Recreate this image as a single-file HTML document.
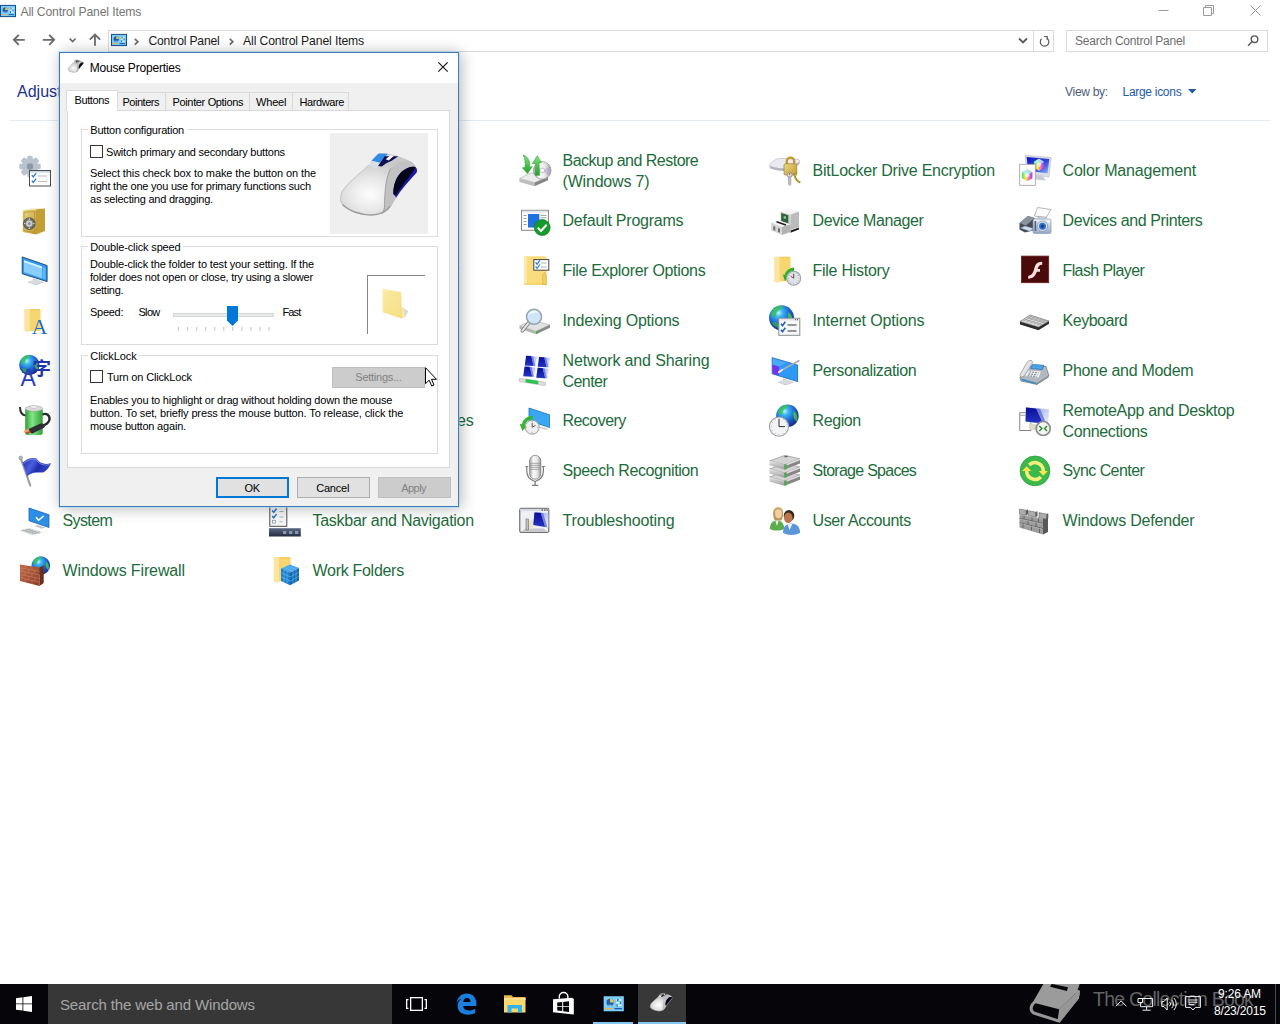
<!DOCTYPE html>
<html><head><meta charset="utf-8"><title>All Control Panel Items</title>
<style>
html,body{margin:0;padding:0;}
body{width:1280px;height:1024px;overflow:hidden;background:#fff;position:relative;font-family:"Liberation Sans",sans-serif;}
.a{position:absolute;white-space:nowrap;}
svg{position:absolute;overflow:visible;}
.bx{position:absolute;box-sizing:border-box;}
</style></head><body>
<svg width="0" height="0" style="left:0;top:0"><defs>
<radialGradient id="gGlobe" cx=".38" cy=".3" r=".75"><stop offset="0" stop-color="#b9f3ff"/><stop offset=".22" stop-color="#39b6f0"/><stop offset=".6" stop-color="#1f5fd0"/><stop offset="1" stop-color="#18247e"/></radialGradient>
<linearGradient id="gFolder" x1="0" y1="0" x2="0" y2="1"><stop offset="0" stop-color="#fbe08a"/><stop offset="1" stop-color="#f4cd5e"/></linearGradient>
<linearGradient id="gSilverH" x1="0" y1="0" x2="1" y2="0"><stop offset="0" stop-color="#a9a9a9"/><stop offset=".35" stop-color="#fbfbfb"/><stop offset=".7" stop-color="#e3e3e6"/><stop offset="1" stop-color="#9a9a9a"/></linearGradient>
<linearGradient id="gSilverV" x1="0" y1="0" x2="0" y2="1"><stop offset="0" stop-color="#f6f6f6"/><stop offset="1" stop-color="#b4b4b4"/></linearGradient>
<linearGradient id="gSilverV2" x1="0" y1="0" x2="0" y2="1"><stop offset="0" stop-color="#e9e9e9"/><stop offset="1" stop-color="#9a9a9a"/></linearGradient>
<linearGradient id="gScreen" x1="0" y1="0" x2="1" y2=".9"><stop offset="0" stop-color="#0c14a0"/><stop offset=".4" stop-color="#2436c8"/><stop offset=".62" stop-color="#8fa4ee"/><stop offset="1" stop-color="#f2f5ff"/></linearGradient>
<linearGradient id="gScrBg" x1="0" y1="0" x2="1" y2="1"><stop offset="0" stop-color="#6f82e6"/><stop offset=".55" stop-color="#c3cdf7"/><stop offset="1" stop-color="#f1f4ff"/></linearGradient>
<linearGradient id="gNavy" x1="0" y1="0" x2="0" y2="1"><stop offset="0" stop-color="#0a0f96"/><stop offset="1" stop-color="#2434c4"/></linearGradient>
<linearGradient id="gCMScr" x1="0" y1="0" x2="1" y2="1"><stop offset="0" stop-color="#1018b8"/><stop offset=".55" stop-color="#2a44dc"/><stop offset="1" stop-color="#8fb4f6"/></linearGradient>
<linearGradient id="gGreenH" x1="0" y1="0" x2="1" y2="0"><stop offset="0" stop-color="#2e9e36"/><stop offset=".4" stop-color="#86e486"/><stop offset="1" stop-color="#2f9f38"/></linearGradient>
<linearGradient id="gGreenV" x1="0" y1="0" x2="0" y2="1"><stop offset="0" stop-color="#7fe57a"/><stop offset="1" stop-color="#22a02c"/></linearGradient>
<linearGradient id="gFlag" x1="0" y1="0" x2="1" y2=".4"><stop offset="0" stop-color="#1c2aa0"/><stop offset=".4" stop-color="#4a5fe0"/><stop offset=".65" stop-color="#1f2ea8"/><stop offset="1" stop-color="#3448c8"/></linearGradient>
<linearGradient id="gRainbow" x1="0" y1="0" x2="1" y2="0"><stop offset="0" stop-color="#3fe27a"/><stop offset=".35" stop-color="#f3f03a"/><stop offset=".7" stop-color="#ff5fd0"/><stop offset="1" stop-color="#7a4cf0"/></linearGradient>
<linearGradient id="gBar" x1="0" y1="0" x2="0" y2="1"><stop offset="0" stop-color="#5c6986"/><stop offset="1" stop-color="#232b40"/></linearGradient>
<linearGradient id="gBrick" x1="0" y1="0" x2="1" y2="1"><stop offset="0" stop-color="#c26a4a"/><stop offset="1" stop-color="#8e3f28"/></linearGradient>
<linearGradient id="gGold" x1="0" y1="0" x2="1" y2="1"><stop offset="0" stop-color="#ead98a"/><stop offset="1" stop-color="#c39a2c"/></linearGradient>
<linearGradient id="gCam" x1="0" y1="0" x2="0" y2="1"><stop offset="0" stop-color="#eef3f9"/><stop offset="1" stop-color="#93a9c8"/></linearGradient>
</defs></svg>
<!-- window chrome -->
<svg style="left:0px;top:3px" width="16" height="16" viewBox="0 0 32 32"><rect x="1" y="4.800" width="30" height="22.400" fill="#7ccdfb" stroke="#0f4f8a" stroke-width="2"/><circle cx="10.500" cy="14" r="5.300" fill="#1c5fae"/><path d="M10.500 14V8.700A5.300 5.300 0 0 1 15.800 14z" fill="#f6c23a"/><path d="M7 17.500a5.300 5.300 0 0 0 7 0z" fill="#e8f6ff" opacity=".7"/><path d="M19.500 10.500h8M19.500 14.500h8M19.500 18.500h8" stroke="#e8f6ff" stroke-width="2"/><path d="M22 9v3M26 13v3M21 17v3" stroke="#1c5fae" stroke-width="2"/><path d="M3.500 23.300h11" stroke="#e9b44a" stroke-width="2"/><path d="M17 23.300h11.500" stroke="#1c5fae" stroke-width="2"/></svg>
<div class="a " style="left:20.4px;top:3.5px;font-size:12.2px;line-height:16px;color:#757575;letter-spacing:-0.132px;">All Control Panel Items</div>
<svg style="left:1150px;top:0" width="130" height="24" viewBox="0 0 130 24"><g stroke="#9a9a9a" stroke-width="1" fill="none"><path d="M8.5 10.5h10"/><path d="M53.5 7.5h8v8h-8z M55.5 7.5v-2h8v8h-2"/><path d="M100.5 5.5l10 10M110.500 5.5l-10 10"/></g></svg>
<svg style="left:0;top:30px" width="108" height="22" viewBox="0 0 108 22"><g stroke="#6b6b6b" stroke-width="1.900" fill="none"><path d="M13.900 9.850H24.800M18.800 4.900L13.900 9.850L18.800 14.800"/><path d="M42.900 9.850H54.100M49.200 4.900L54.100 9.850L49.200 14.800"/><path d="M69.600 8.500L72.600 11.600L75.600 8.500" stroke-width="1.600"/><path d="M95 15.700V4.800M89.800 9.700L95 4.500L100.200 9.700" stroke-width="1.800"/></g></svg>
<div class="bx" style="left:108px;top:30px;width:946px;height:22px;border:1px solid #d9d9d9"></div>
<div class="bx" style="left:1033px;top:30px;width:1px;height:22px;background:#d9d9d9"></div>
<svg style="left:111px;top:32px" width="16" height="16" viewBox="0 0 32 32"><rect x="1" y="4.800" width="30" height="22.400" fill="#7ccdfb" stroke="#0f4f8a" stroke-width="2"/><circle cx="10.500" cy="14" r="5.300" fill="#1c5fae"/><path d="M10.500 14V8.700A5.300 5.300 0 0 1 15.800 14z" fill="#f6c23a"/><path d="M7 17.500a5.300 5.300 0 0 0 7 0z" fill="#e8f6ff" opacity=".7"/><path d="M19.500 10.500h8M19.500 14.500h8M19.500 18.500h8" stroke="#e8f6ff" stroke-width="2"/><path d="M22 9v3M26 13v3M21 17v3" stroke="#1c5fae" stroke-width="2"/><path d="M3.500 23.300h11" stroke="#e9b44a" stroke-width="2"/><path d="M17 23.300h11.500" stroke="#1c5fae" stroke-width="2"/></svg>
<svg style="left:130px;top:36px" width="110" height="10" viewBox="0 0 110 10"><g stroke="#6b6b6b" stroke-width="1.600" fill="none"><path d="M4.800 2.800l3.100 2.900-3.100 2.900"/><path d="M99.800 2.800l3.100 2.900-3.100 2.900"/></g></svg>
<div class="a " style="left:148.4px;top:32.8px;font-size:12.2px;line-height:16px;color:#1b1b1b;letter-spacing:-0.205px;">Control Panel</div>
<div class="a " style="left:243.1px;top:32.8px;font-size:12.2px;line-height:16px;color:#1b1b1b;letter-spacing:-0.132px;">All Control Panel Items</div>
<svg style="left:1015px;top:34px" width="40" height="14" viewBox="0 0 40 14"><g stroke="#5a5a5a" stroke-width="1.800" fill="none"><path d="M4 4.500l4 4 4-4"/><path d="M31.800 4.200a4.300 4.300 0 1 1 -5.200 .6" stroke-width="1.200"/><path d="M29 2.500h3.200v3.200" stroke-width="1.200"/></g></svg>
<div class="bx" style="left:1066px;top:30px;width:202px;height:22px;border:1px solid #d9d9d9"></div>
<div class="a " style="left:1075px;top:33px;font-size:12px;line-height:16px;color:#6d6d6d;letter-spacing:-0.209px;">Search Control Panel</div>
<svg style="left:1246px;top:34px" width="14" height="14" viewBox="0 0 14 14"><g stroke="#555" stroke-width="1.400" fill="none"><circle cx="8.500" cy="5.200" r="3.300"/><path d="M6 7.800l-4 4"/></g></svg>
<div class="a " style="left:17px;top:81px;font-size:16px;line-height:22px;color:#1e3287;">Adjust your computer's settings</div>
<div class="a " style="left:1065px;top:83.5px;font-size:12px;line-height:16px;color:#4c607a;letter-spacing:-0.285px;">View by:</div>
<div class="a " style="left:1122.5px;top:83.5px;font-size:12px;line-height:16px;color:#1e5aa8;letter-spacing:-0.290px;">Large icons</div>
<svg style="left:1188px;top:89px" width="9" height="5" viewBox="0 0 9 5"><path d="M0 0h8.500l-4.250 4.500z" fill="#1e5aa8"/></svg>
<div class="bx" style="left:10px;top:120px;width:1260px;height:1px;background:#e2eaf3"></div>
<!-- control panel items -->
<svg style="left:19px;top:154px" width="32" height="32" viewBox="0 0 32 32"><g fill="#bac2ce"><rect x="8.300" y="1.800" width="5.400" height="6" rx="1.200" transform="rotate(0 11 12.500)"/><rect x="8.300" y="1.800" width="5.400" height="6" rx="1.200" transform="rotate(45 11 12.500)"/><rect x="8.300" y="1.800" width="5.400" height="6" rx="1.200" transform="rotate(90 11 12.500)"/><rect x="8.300" y="1.800" width="5.400" height="6" rx="1.200" transform="rotate(135 11 12.500)"/><rect x="8.300" y="1.800" width="5.400" height="6" rx="1.200" transform="rotate(180 11 12.500)"/><rect x="8.300" y="1.800" width="5.400" height="6" rx="1.200" transform="rotate(225 11 12.500)"/><rect x="8.300" y="1.800" width="5.400" height="6" rx="1.200" transform="rotate(270 11 12.500)"/><rect x="8.300" y="1.800" width="5.400" height="6" rx="1.200" transform="rotate(315 11 12.500)"/><circle cx="11" cy="12.500" r="8.300"/></g><circle cx="11" cy="12.500" r="3.200" fill="#8b96a6"/><rect x="10.500" y="16.500" width="21" height="15.500" fill="#fdfdfd" stroke="#4c4c4c" stroke-width="1"/><rect x="11" y="17" width="20" height="1.600" fill="#c9d6e8"/><path d="M12.8 21.1l1.500 1.800 2.800-3.800" fill="none" stroke="#2a7fd4" stroke-width="1.3"/><path d="M12.8 26.6l1.500 1.800 2.800-3.800" fill="none" stroke="#2a7fd4" stroke-width="1.3"/><path d="M19 22h9M19 27.500h9" stroke="#b9bec6" stroke-width="1"/></svg>
<div class="a " style="left:62.5px;top:160.2px;font-size:16px;line-height:21px;color:#1d6b3b;">Administrative Tools</div>
<svg style="left:269px;top:154px" width="32" height="32" viewBox="0 0 32 32"><circle cx="15" cy="15" r="13" fill="url(#gSilverH)" stroke="#8b8b8b" stroke-width=".7"/><circle cx="15" cy="15" r="3" fill="#fff" stroke="#9a9a9a" stroke-width=".6"/><circle cx="23" cy="23" r="8" fill="#179a2c"/><path d="M20.500 18.500l7 4.500-7 4.500z" fill="#fff"/></svg>
<div class="a " style="left:312.5px;top:160.2px;font-size:16px;line-height:21px;color:#1d6b3b;">AutoPlay</div>
<svg style="left:519px;top:154px" width="32" height="32" viewBox="0 0 32 32"><path d="M.5 24.500L12 18.800 29 23 15.500 28.700z" fill="#ececec" stroke="#9a9a9a" stroke-width=".5"/><path d="M.5 24.500L15.500 28.700V32.300L.5 28z" fill="#bdbdbd"/><path d="M15.500 28.700L29 23V26.300L15.500 32.300z" fill="#858585"/><circle cx="23.200" cy="16.400" r="8.800" fill="url(#gSilverH)" stroke="#8b8b8b" stroke-width=".7"/><path d="M23.200 16.400L31 12.500A8.800 8.800 0 0 1 30 22z" fill="#b9a0c8" opacity=".55"/><circle cx="23.200" cy="16.400" r="2.300" fill="#fff" stroke="#9a9a9a" stroke-width=".6"/><path d="M4 1C9 2 11.300 8 10.800 13.200L13.300 12.600 8.600 19.600 3.300 13.800 6 13.600C6.600 9 6 4 4 1z" fill="url(#gGreenV)" stroke="#1f8f27" stroke-width=".5"/><path d="M16.300 21.300L16.800 9.300 13.300 9.800 18.200 1.800 22.300 8.600 20 8.700 20.600 21.300z" fill="url(#gGreenV)" stroke="#1f8f27" stroke-width=".5"/></svg>
<div class="a " style="left:562.5px;top:149.7px;font-size:16px;line-height:21px;color:#1d6b3b;letter-spacing:-0.513px;">Backup and Restore</div>
<div class="a " style="left:562.5px;top:170.7px;font-size:16px;line-height:21px;color:#1d6b3b;letter-spacing:-0.182px;">(Windows 7)</div>
<svg style="left:769px;top:154px" width="32" height="32" viewBox="0 0 32 32"><path d="M.6 11.500C.6 9.500 5 5.500 10.500 4.300L29 5.300C31 5.800 31 9 29.500 10.500L21.500 16.500C14 17 5 15.500 1.500 14z" fill="#eaeaf0" stroke="#a5a5b0" stroke-width=".5"/><path d="M.6 11.500C4 13.500 14 15 21.500 14.200L30.300 7.500C30.700 8.800 30.300 9.800 29.500 10.500L21.500 17C14 17.600 5 16 1.300 14.300z" fill="#b5b5c0"/><path d="M17.800 10.500V7.300a3.700 3.700 0 0 1 7.400 0V10.500" fill="none" stroke="#c59a2c" stroke-width="2.300"/><rect x="15" y="9.800" width="12.800" height="11.300" rx="1.500" fill="url(#gGold)" stroke="#8f6b14" stroke-width=".6"/><circle cx="20.600" cy="20.800" r="2.500" fill="#d8d8d8" stroke="#808080" stroke-width=".7"/><circle cx="20.600" cy="20" r=".8" fill="#c03020"/><path d="M19.600 23h2.200v7.500l-1.100 1-1.100-1z" fill="#c2c2c2" stroke="#808080" stroke-width=".5"/><path d="M25.300 19C25.800 24 27 27 31.300 28.600" fill="none" stroke="#b8901e" stroke-width="2"/></svg>
<div class="a " style="left:812.5px;top:160.2px;font-size:16px;line-height:21px;color:#1d6b3b;letter-spacing:-0.236px;">BitLocker Drive Encryption</div>
<svg style="left:1019px;top:154px" width="32" height="32" viewBox="0 0 32 32"><path d="M6.200 1.300L32 3.500 30 23 8 20z" fill="#d9dde6" stroke="#aab0bd" stroke-width=".5"/><path d="M14 20.800l10 1.300 2.500 4.500-11-1z" fill="#c8ccd4"/><path d="M7.600 2.900L30.300 4.900 28.500 19.300 9.200 17z" fill="url(#gCMScr)"/><path d="M20 4.800000000000001L25.2 7.8V13.8L20 16.8L14.8 13.8V7.8z" fill="url(#gRainbow)"/><path d="M20 4.800000000000001L25.2 7.8L20 10.8L14.8 7.8z" fill="#9ff2ff" opacity=".8"/><circle cx="20" cy="10.8" r="2.1" fill="#fff" opacity=".7"/><rect x=".7" y="10.300" width="15.600" height="21" fill="#fff" stroke="#a79aa8" stroke-width=".8"/><path d="M8.2 15.3L13.4 18.3V24.3L8.2 27.3L3.0 24.3V18.3z" fill="url(#gRainbow)"/><path d="M8.2 15.3L13.4 18.3L8.2 21.3L3.0 18.3z" fill="#9ff2ff" opacity=".8"/><circle cx="8.2" cy="21.3" r="2.1" fill="#fff" opacity=".7"/></svg>
<div class="a " style="left:1062.5px;top:160.2px;font-size:16px;line-height:21px;color:#1d6b3b;letter-spacing:-0.166px;">Color Management</div>
<svg style="left:19px;top:204px" width="32" height="32" viewBox="0 0 32 32"><path d="M17 5.300L26 4.600V27L17 30.600z" fill="#c29f36"/><path d="M3.700 6.200L17 5.300V30.600L3.700 28z" fill="url(#gGold)"/><path d="M3.700 6.200L12 4.500L26 4.600L17 5.300z" fill="#f0e2a0"/><path d="M5 8.300L15.600 7.500V28.500L5 26.600z" fill="none" stroke="#b18e2c" stroke-width=".7"/><circle cx="10.300" cy="19.600" r="5.800" fill="#6e6e6e" stroke="#3e3e3e" stroke-width=".7"/><circle cx="10.300" cy="19.600" r="3.300" fill="#c9c9c9"/><circle cx="10.300" cy="19.600" r="1.300" fill="#8d8d8d"/><g fill="#f2f2f2"><circle cx="10.300" cy="15" r=".7"/><circle cx="10.300" cy="24.200" r=".7"/><circle cx="5.700" cy="19.600" r=".7"/><circle cx="14.900" cy="19.600" r=".7"/></g></svg>
<div class="a " style="left:62.5px;top:210.2px;font-size:16px;line-height:21px;color:#1d6b3b;">Credential Manager</div>
<svg style="left:269px;top:204px" width="32" height="32" viewBox="0 0 32 32"><circle cx="12" cy="13" r="11" fill="#f3f4f5" stroke="#9aa2a8" stroke-width="1.100"/><circle cx="21.30" cy="13.00" r=".45" fill="#8a8a8a"/><circle cx="20.05" cy="17.65" r=".45" fill="#8a8a8a"/><circle cx="16.65" cy="21.05" r=".45" fill="#8a8a8a"/><circle cx="12.00" cy="22.30" r=".45" fill="#8a8a8a"/><circle cx="7.35" cy="21.05" r=".45" fill="#8a8a8a"/><circle cx="3.95" cy="17.65" r=".45" fill="#8a8a8a"/><circle cx="2.70" cy="13.00" r=".45" fill="#8a8a8a"/><circle cx="3.95" cy="8.35" r=".45" fill="#8a8a8a"/><circle cx="7.35" cy="4.95" r=".45" fill="#8a8a8a"/><circle cx="12.00" cy="3.70" r=".45" fill="#8a8a8a"/><circle cx="16.65" cy="4.95" r=".45" fill="#8a8a8a"/><circle cx="20.05" cy="8.35" r=".45" fill="#8a8a8a"/><path d="M12 13V5.500M12 13h6" stroke="#333" stroke-width="1" fill="none"/><rect x="16" y="17" width="15" height="14" fill="#fff" stroke="#7a7a7a" stroke-width=".8"/><rect x="16" y="17" width="15" height="3.500" fill="#2b8fe6"/><path d="M18.500 23.500h10M18.500 26h10M18.500 28.500h10" stroke="#9aa0a8" stroke-width=".9"/></svg>
<div class="a " style="left:312.5px;top:210.2px;font-size:16px;line-height:21px;color:#1d6b3b;">Date and Time</div>
<svg style="left:519px;top:204px" width="32" height="32" viewBox="0 0 32 32"><rect x="2.500" y="6.300" width="27" height="20" fill="#fbfbfb" stroke="#8a8a8a" stroke-width="1"/><rect x="3" y="6.800" width="26" height="1.800" fill="#dfe5ee"/><path d="M4.500 11.500h3M4.500 14.500h3M4.500 17.500h3M4.500 20.500h3" stroke="#9aa0a8" stroke-width="1.100"/><rect x="9" y="10" width="11.300" height="13.500" fill="#1f72e0"/><path d="M21.500 11.500h6M21.500 13.800h6M21.500 16h4" stroke="#9aa0a8" stroke-width=".9"/><circle cx="23.200" cy="23.600" r="8" fill="#179a2c" stroke="#0e7d20" stroke-width=".6"/><path d="M18.800 23.700l3.200 3.300 5.700-6.200" fill="none" stroke="#fff" stroke-width="2"/></svg>
<div class="a " style="left:562.5px;top:210.2px;font-size:16px;line-height:21px;color:#1d6b3b;letter-spacing:-0.226px;">Default Programs</div>
<svg style="left:769px;top:204px" width="32" height="32" viewBox="0 0 32 32"><path d="M21.500 26.500l8.500-3v2l-8.500 3.200z" fill="#1e1e1e"/><path d="M11.500 7.500L21.500 10.500V26L11.500 21z" fill="#cfcfcf"/><path d="M11.500 7.500L20 4.500 30 7.500 21.500 10.500z" fill="#f3f3f3"/><path d="M21.500 10.500L30 7.500V23L21.500 26z" fill="#bcbcbc"/><path d="M12.200 9L19.300 11.300V19.500L12.200 17z" fill="#2f5f3e"/><rect x="14.600" y="12.300" width="2.400" height="2.400" fill="#8fd08f"/><path d="M2.200 18.500L10 16.500 21.500 20.500 13 23z" fill="#f3f3f3"/><path d="M7.500 17.800l9.500 3.100" stroke="#1e1e1e" stroke-width="1.600"/><path d="M2.200 18.500L13 23V31L2.200 26.500z" fill="#d6d6d6"/><path d="M13 23L21.500 20.500V28L13 31z" fill="#b2b2b2"/><path d="M4.300 22l2 .8v4l-2-.8zM9 24l2 .8v4l-2-.8z" fill="#6f6f6f"/></svg>
<div class="a " style="left:812.5px;top:210.2px;font-size:16px;line-height:21px;color:#1d6b3b;letter-spacing:-0.407px;">Device Manager</div>
<svg style="left:1019px;top:204px" width="32" height="32" viewBox="0 0 32 32"><path d="M.5 19L9 12 15.500 14V26L6 28.500.5 25.500z" fill="#454c55"/><path d="M.5 19L9 12 15.500 14 7 21.500z" fill="#8a929c"/><path d="M1.500 24L11 27.300 14.500 24.500 6 22z" fill="#cfe0f2" stroke="#7888a0" stroke-width=".5"/><path d="M18.500 3.500L32 5.500 27 13.700 15.400 12z" fill="#fbfbfb" stroke="#9a9a9a" stroke-width=".7"/><path d="M19 13h8v2.500h-8z" fill="#dbe3ee" stroke="#7a8aa0" stroke-width=".5"/><rect x="14" y="15" width="18" height="14.400" rx="1.500" fill="url(#gCam)" stroke="#7a8aa0" stroke-width=".6"/><rect x="15.500" y="17" width="1.700" height="10" fill="#56627a"/><circle cx="23.500" cy="22.200" r="5.200" fill="#dbe2ec" stroke="#7a8aa0" stroke-width=".7"/><circle cx="23.500" cy="22.200" r="3.500" fill="#2a6fd0"/><circle cx="23.500" cy="22.200" r="1.500" fill="#123a7a"/><circle cx="29.500" cy="17.500" r=".9" fill="#fff"/></svg>
<div class="a " style="left:1062.5px;top:210.2px;font-size:16px;line-height:21px;color:#1d6b3b;letter-spacing:-0.391px;">Devices and Printers</div>
<svg style="left:19px;top:254px" width="32" height="32" viewBox="0 0 32 32"><path d="M14 24.500l4 1.300v2.200l-4-1.200z" fill="#c3c7cc"/><path d="M9 27.500l8-2.300 7.500 2.600-8 2.700z" fill="#d9dcdf"/><path d="M9 27.500l7.500 3 8-2.700v.8l-8 2.700-7.500-3z" fill="#b9bdc2"/><path d="M3.2 2.9L28.1 11.5L28.1 27.6L3.2 19.8z" fill="#2b9af3" stroke="#17314f" stroke-width=".8" stroke-linejoin="round"/><path d="M5 6.300L23 12.500V24.200L5 18.300z" fill="#9ad7ff" opacity=".85"/><path d="M5 6.300L23 12.500V14.500L5 8.300z" fill="#d6efff"/><path d="M23.600 12.700L26.600 13.700V25.400L23.600 24.400z" fill="#5cb9f8"/></svg>
<div class="a " style="left:62.5px;top:260.2px;font-size:16px;line-height:21px;color:#1d6b3b;">Display</div>
<svg style="left:269px;top:254px" width="32" height="32" viewBox="0 0 32 32"><circle cx="16" cy="16" r="14.500" fill="#2b8fe6" stroke="#1a63b4" stroke-width=".8"/><path d="M16 4.500v23M4.500 16h23" stroke="#fff" stroke-width="2.200"/><path d="M16 2.500l3 4h-6zM16 29.500l3-4h-6zM2.500 16l4-3v6zM29.500 16l-4-3v6z" fill="#fff"/></svg>
<div class="a " style="left:312.5px;top:260.2px;font-size:16px;line-height:21px;color:#1d6b3b;letter-spacing:-0.749px;">Ease of Access Center</div>
<svg style="left:519px;top:254px" width="32" height="32" viewBox="0 0 32 32"><path d="M5.200 2.200H26L27.600 3.500V30.600H5.200z" fill="#fbdc7c"/><path d="M5.200 2.200h2.600v28.400H5.200z" fill="#fdeab0"/><path d="M5.200 29.600h22.400v1H5.200z" fill="#f0c550"/><rect x="14.800" y="5.600" width="15" height="10.600" fill="#fdfdfd" stroke="#454545" stroke-width="1"/><path d="M16.6 8.4l1.500 1.800 2.800-3.800" fill="none" stroke="#2a7fd4" stroke-width="1.2"/><path d="M16.6 12.5l1.500 1.800 2.800-3.800" fill="none" stroke="#2a7fd4" stroke-width="1.2"/><path d="M22 9h5.500M22 13h5.500" stroke="#9aa4b0" stroke-width=".8"/><path d="M23.700 30.500V21.200l1.800-3.200 1.800 3.200V30.500z" fill="#f6cf5f" stroke="#dba93a" stroke-width=".6"/></svg>
<div class="a " style="left:562.5px;top:260.2px;font-size:16px;line-height:21px;color:#1d6b3b;letter-spacing:-0.312px;">File Explorer Options</div>
<svg style="left:769px;top:254px" width="32" height="32" viewBox="0 0 32 32"><path d="M10.0 2.7h11.3v24.6h-11.3z" fill="#f3cb58"/><path d="M5.2 2.7h5.2l0.5 1.3v23.3l-2.1 1.9l-3.5-1.6z" fill="#fbe5a0"/><path d="M10.8 4.0h10.5v22.8h-10.5z" fill="#f7d56f"/><path d="M25 15.200A9.300 9.300 0 0 0 17 21.500" fill="none" stroke="#2db02d" stroke-width="3.200"/><path d="M13.800 20.500l7 1.800-5 4.800z" fill="#2db02d"/><circle cx="24.7" cy="24.2" r="7" fill="#dfe3e6" stroke="#9aa2a8" stroke-width="1.100"/><circle cx="30.00" cy="24.20" r=".45" fill="#8a8a8a"/><circle cx="29.29" cy="26.85" r=".45" fill="#8a8a8a"/><circle cx="27.35" cy="28.79" r=".45" fill="#8a8a8a"/><circle cx="24.70" cy="29.50" r=".45" fill="#8a8a8a"/><circle cx="22.05" cy="28.79" r=".45" fill="#8a8a8a"/><circle cx="20.11" cy="26.85" r=".45" fill="#8a8a8a"/><circle cx="19.40" cy="24.20" r=".45" fill="#8a8a8a"/><circle cx="20.11" cy="21.55" r=".45" fill="#8a8a8a"/><circle cx="22.05" cy="19.61" r=".45" fill="#8a8a8a"/><circle cx="24.70" cy="18.90" r=".45" fill="#8a8a8a"/><circle cx="27.35" cy="19.61" r=".45" fill="#8a8a8a"/><circle cx="29.29" cy="21.55" r=".45" fill="#8a8a8a"/><path d="M24.700 24.200V19.800" stroke="#444" stroke-width=".9"/><path d="M24.700 24.200l-3-2" stroke="#c03030" stroke-width="1"/></svg>
<div class="a " style="left:812.5px;top:260.2px;font-size:16px;line-height:21px;color:#1d6b3b;letter-spacing:-0.262px;">File History</div>
<svg style="left:1019px;top:254px" width="32" height="32" viewBox="0 0 32 32"><rect x="2.500" y="2.100" width="27.200" height="26.600" fill="#4a0a0a" stroke="#6e1a1a" stroke-width=".8"/><path d="M23.200 7.800C17.500 7.800 16.300 11 15.300 14.500C14.200 18.500 13.200 21 9.200 22V24.800C14.500 24.500 16.600 21.500 17.800 17.800H21V15H18.600C19.300 12.500 20.200 10.800 23.200 10.800z" fill="#f8dede"/></svg>
<div class="a " style="left:1062.5px;top:260.2px;font-size:16px;line-height:21px;color:#1d6b3b;letter-spacing:-0.602px;">Flash Player</div>
<svg style="left:19px;top:304px" width="32" height="32" viewBox="0 0 32 32"><path d="M10.0 5h11.3v21.9h-11.3z" fill="#f3cb58"/><path d="M5.2 5h5.2l0.5 1.2v20.7l-2.1 1.6l-3.5-1.4z" fill="#fbe5a0"/><path d="M10.8 6.2h10.5v20.2h-10.5z" fill="#f7d56f"/><text x="12.800" y="30.300" font-family="Liberation Serif,serif" font-size="21.500" fill="#1b6fc6">A</text></svg>
<div class="a " style="left:62.5px;top:310.2px;font-size:16px;line-height:21px;color:#1d6b3b;">Fonts</div>
<svg style="left:269px;top:304px" width="32" height="32" viewBox="0 0 32 32"><circle cx="10" cy="20" r="8.500" fill="#3fb54a"/><circle cx="22" cy="20" r="8.500" fill="#f2b632"/><circle cx="16" cy="10" r="8.500" fill="url(#gGlobe)"/></svg>
<div class="a " style="left:312.5px;top:310.2px;font-size:16px;line-height:21px;color:#1d6b3b;">HomeGroup</div>
<svg style="left:519px;top:304px" width="32" height="32" viewBox="0 0 32 32"><path d="M.5 21.8L13 16.3L31 20.8L17 27.3z" fill="#e2e2e2" stroke="#a2a2a2" stroke-width=".5"/><path d="M.5 21.8L17 27.3V30.3L.5 24.8z" fill="#b4b4b4"/><path d="M17 27.3L31 20.8V23.8L17 30.3z" fill="#8b8b8b"/><path d="M17 27.6l2.200-1v2.600l-2.200 1z" fill="#4caf50"/><path d="M10 18.300L3.300 26.800" stroke="#7e7e7e" stroke-width="3.600" stroke-linecap="round"/><path d="M10 18.300L3.300 26.800" stroke="#e4e4e4" stroke-width="2" stroke-linecap="round"/><circle cx="15" cy="12.800" r="7.500" fill="#cfe6fa" stroke="#98a4b2" stroke-width="1.500"/><path d="M9.500 11a6 6 0 0 1 10-2.500c-3 0-7 .5-10 2.500z" fill="#fff" opacity=".7"/></svg>
<div class="a " style="left:562.5px;top:310.2px;font-size:16px;line-height:21px;color:#1d6b3b;letter-spacing:-0.199px;">Indexing Options</div>
<svg style="left:769px;top:304px" width="32" height="32" viewBox="0 0 32 32"><circle cx="12.5" cy="13.8" r="12.5" fill="url(#gGlobe)"/><path d="M2.5 9.4c1.9-6.2 7.5-8.8 11.2-6.9c-1.2 3.8-6.2 2.5-6.9 8.8c-2.5 3.1-3.8 1.2-4.4-1.9z" fill="#3cc24a" opacity=".85"/><path d="M19.4 8.2c3.8 2.5 5.0 7.5 3.8 11.9c-3.8-1.2-5.0-7.5-3.8-11.9z" fill="#4fc848" opacity=".8"/><path d="M3.1 18.2c3.8-1.2 7.5 1.2 8.8 5.6c-3.8 0.6-7.5-1.9-8.8-5.6z" fill="#2fae44" opacity=".8"/><rect x="9.800" y="14.300" width="21" height="17" fill="#f6f8fb" stroke="#8a8a8a" stroke-width="1"/><rect x="10.300" y="14.800" width="20" height="1.800" fill="#dfe5ee"/><path d="M26 15.700h1M28 15.700h1" stroke="#333" stroke-width=".9"/><path d="M12 19.8l1.500 1.800 2.800-3.800" fill="none" stroke="#1f5fc0" stroke-width="1.6"/><path d="M12 25.8l1.500 1.800 2.800-3.800" fill="none" stroke="#1f5fc0" stroke-width="1.6"/><path d="M18.500 21h9M18.500 27h9" stroke="#333" stroke-width="1.200"/></svg>
<div class="a " style="left:812.5px;top:310.2px;font-size:16px;line-height:21px;color:#1d6b3b;letter-spacing:-0.119px;">Internet Options</div>
<svg style="left:1019px;top:304px" width="32" height="32" viewBox="0 0 32 32"><path d="M1 17.500L19.500 23 30 17V19.800L19.500 26.300 1 20.500z" fill="#2c2c2c"/><path d="M1 17.500L11 11 30 17 19.500 23z" fill="#dadada" stroke="#5a5a5a" stroke-width=".6"/><path d="M4 17.300L12.500 12.300M7.500 18.300L16 13.300M11 19.300L19.500 14.400M14.500 20.300L23 15.500M18 21.300L26.500 16.600M5.500 15.300L23.500 20.800M8.300 13.500L26.300 19M10.500 12.300L28 17.700" stroke="#8a8a8a" stroke-width=".6" fill="none"/></svg>
<div class="a " style="left:1062.5px;top:310.2px;font-size:16px;line-height:21px;color:#1d6b3b;letter-spacing:-0.467px;">Keyboard</div>
<svg style="left:19px;top:354px" width="32" height="32" viewBox="0 0 32 32"><circle cx="10.3" cy="11" r="10.2" fill="url(#gGlobe)"/><path d="M2.1 7.4c1.5-5.1 6.1-7.1 9.2-5.6c-1.0 3.1-5.1 2.0-5.6 7.1c-2.0 2.5-3.1 1.0-3.6-1.5z" fill="#3cc24a" opacity=".85"/><path d="M15.9 6.4c3.1 2.0 4.1 6.1 3.1 9.7c-3.1-1.0-4.1-6.1-3.1-9.7z" fill="#4fc848" opacity=".8"/><path d="M2.7 14.6c3.1-1.0 6.1 1.0 7.1 4.6c-3.1 0.5-6.1-1.5-7.1-4.6z" fill="#2fae44" opacity=".8"/><text x="1.600" y="31.600" font-family="Liberation Sans,sans-serif" font-size="23" fill="#2a3fb5">A</text><text x="13.500" y="20.800" font-family="Noto Sans CJK SC,sans-serif" font-size="18.500" font-weight="bold" fill="#2434ac">字</text></svg>
<div class="a " style="left:62.5px;top:360.2px;font-size:16px;line-height:21px;color:#1d6b3b;">Language</div>
<svg style="left:269px;top:354px" width="32" height="32" viewBox="0 0 32 32"><defs><radialGradient id="mgI" cx="0.38" cy="0.66" r="0.55"><stop offset="0" stop-color="#fdfdfd"/><stop offset="0.45" stop-color="#e9e9e9"/><stop offset="1" stop-color="#c9c9c9"/></radialGradient></defs><g transform="translate(-5,-7) scale(.0445)"><path d="M400 340C340 400 230 480 170 560C130 610 135 680 170 720C230 770 330 800 420 800C500 800 560 770 600 710C650 630 720 540 840 400C845 370 820 330 780 305C720 270 640 245 560 232C500 226 470 240 440 280Z" fill="url(#mgI)"/><path d="M600 370C560 450 545 560 545 700C545 740 535 765 520 785C560 775 590 740 620 690C660 620 720 540 840 400C845 370 820 330 780 305C720 290 650 320 600 370Z" fill="#c2c2c2"/><path d="M600 370C560 450 545 560 545 700C545 740 535 765 520 785" fill="none" stroke="#8e8e8e" stroke-width="7"/><path d="M625 600C625 520 650 450 700 400C750 360 800 345 830 360C845 375 842 395 836 410C760 490 700 560 650 635Z" fill="#1a1aa6"/><path d="M625 598C625 520 650 450 700 400C750 360 800 345 828 358C795 420 720 505 662 592C652 610 640 616 631 612Z" fill="#05051c"/><path d="M425 300L490 232L575 236L500 318Z" fill="#2f8ae8"/><path d="M400 340L425 300L500 318L470 370Z" fill="#d9dfe8"/><path d="M485 348L545 258L670 258L610 300L560 322L520 352Z" fill="#0f1050"/><path d="M555 285L598 246L628 256L583 298Z" fill="#f4f4f4"/><path d="M160 700C220 760 330 795 420 795C500 795 560 765 598 712" fill="none" stroke="#9c9c9c" stroke-width="14"/><path d="M400 340C340 400 230 480 170 560C135 605 135 670 160 700" fill="none" stroke="#bdbdbd" stroke-width="8"/></g></svg>
<div class="a " style="left:312.5px;top:360.2px;font-size:16px;line-height:21px;color:#1d6b3b;">Mouse</div>
<svg style="left:519px;top:354px" width="32" height="32" viewBox="0 0 32 32"><path d="M7.1 1.8L18.299999999999997 2.4L17.0 12.0L5.8 11.4z" fill="url(#gScrBg)" stroke="#f4f6fb" stroke-width="0.8"/><path d="M7.1 1.8L12.14 2.07L14.76 11.88L5.8 11.4z" fill="url(#gNavy)"/><path d="M12.14 2.07L14.04 2.17L16.44 11.97L14.76 11.88z" fill="#5868d8" opacity=".75"/><path d="M20.1 2.9L31.3 3.5L30.0 13.3L18.8 12.700000000000001z" fill="url(#gScrBg)" stroke="#f4f6fb" stroke-width="0.8"/><path d="M20.1 2.9L25.14 3.17L27.76 13.18L18.8 12.700000000000001z" fill="url(#gNavy)"/><path d="M25.14 3.17L27.04 3.27L29.44 13.27L27.76 13.18z" fill="#5868d8" opacity=".75"/><path d="M5.6 12.6L16.799999999999997 13.2L15.5 22.8L4.3 22.2z" fill="url(#gScrBg)" stroke="#f4f6fb" stroke-width="0.8"/><path d="M5.6 12.6L10.64 12.87L13.26 22.68L4.3 22.2z" fill="url(#gNavy)"/><path d="M10.64 12.87L12.54 12.97L14.94 22.77L13.26 22.68z" fill="#5868d8" opacity=".75"/><path d="M18.6 13.8L29.8 14.4L28.5 24.400000000000002L17.3 23.8z" fill="url(#gScrBg)" stroke="#f4f6fb" stroke-width="0.8"/><path d="M18.6 13.8L23.64 14.07L26.26 24.28L17.3 23.8z" fill="url(#gNavy)"/><path d="M23.64 14.07L25.54 14.17L27.94 24.37L26.26 24.28z" fill="#5868d8" opacity=".75"/><path d="M.8 24.300L26 28.300C27.300 28.600 27 31.800 25.600 31.600L.6 27.600C-.4 27.300-.3 24.200.8 24.300z" fill="#dedede" stroke="#a8a8a8" stroke-width=".5"/><path d="M7.500 25l11 1.700c1.400.3 1.200 3.700-.2 3.500l-11-1.700c-1.300-.3-1-3.700.2-3.500z" fill="#2fc050"/></svg>
<div class="a " style="left:562.5px;top:349.7px;font-size:16px;line-height:21px;color:#1d6b3b;letter-spacing:-0.131px;">Network and Sharing</div>
<div class="a " style="left:562.5px;top:370.7px;font-size:16px;line-height:21px;color:#1d6b3b;letter-spacing:-0.551px;">Center</div>
<svg style="left:769px;top:354px" width="32" height="32" viewBox="0 0 32 32"><path d="M14 24.500l4 1.300v2.200l-4-1.200z" fill="#c3c7cc"/><path d="M9 27.500l8-2.300 7.500 2.600-8 2.700z" fill="#d9dcdf"/><path d="M9 27.500l7.500 3 8-2.700v.8l-8 2.700-7.500-3z" fill="#b9bdc2"/><path d="M3.2 3.7L28.6 11L28.6 27.6L3.2 19.8z" fill="#2e9af5" stroke="#1a63b4" stroke-width=".8" stroke-linejoin="round"/><path d="M3.700 10.500L10 12.500V21.500L3.700 19.500z" fill="#7b2fe8"/><path d="M3.700 4.500L18 8.700 10 12.500 3.700 10.500z" fill="#55b4f8" opacity=".7"/><path d="M29.800 6.800L12 16.500" stroke="#a9adb2" stroke-width="1.800" stroke-linecap="round"/><path d="M13 16L9.800 18.300" stroke="#e8f0f8" stroke-width="1.800" stroke-linecap="round"/></svg>
<div class="a " style="left:812.5px;top:360.2px;font-size:16px;line-height:21px;color:#1d6b3b;letter-spacing:-0.373px;">Personalization</div>
<svg style="left:1019px;top:354px" width="32" height="32" viewBox="0 0 32 32"><path d="M1 23.500L11 12 27 12.500 30 22 18 30.500 2 27z" fill="#b4b9c1" stroke="#6c6c6c" stroke-width=".7"/><path d="M2.500 24.500L17.500 28.700V30.200L2.500 26.300z" fill="#3a8ac8"/><path d="M18 28.700L29.500 21.500V23.500L18 30.500z" fill="#8b8f97"/><path d="M9 16.500L22 17.500 19.500 23.500 6 22z" fill="#eef1f4"/><path d="M10.500 18l9 .8M9.500 20l9 .8M8.500 21.700l9 .8" stroke="#6f7680" stroke-width="1.100" stroke-dasharray="1.600 1.200"/><path d="M13.500 10.300L25 11.300 23.300 15.700 11.500 14.600z" fill="#4aa3e8" stroke="#2a6aa0" stroke-width=".6"/><path d="M1 20.500L8 8.300C9.500 6.500 12 6 13 6.800L13.600 8.600 5.300 22 1.800 23.300z" fill="#e3e3e3" stroke="#888" stroke-width=".6"/></svg>
<div class="a " style="left:1062.5px;top:360.2px;font-size:16px;line-height:21px;color:#1d6b3b;letter-spacing:-0.290px;">Phone and Modem</div>
<svg style="left:19px;top:404px" width="32" height="32" viewBox="0 0 32 32"><path d="M1 3C1 8 3 11.300 7 11.500" fill="none" stroke="#2a2a30" stroke-width="2"/><path d="M23 10.500C30 8 33 15 28 19.500L23 22.500" fill="none" stroke="#2a2a30" stroke-width="2.400"/><rect x="6.200" y="4" width="17.500" height="27" rx="2.500" fill="url(#gGreenH)"/><ellipse cx="15" cy="4.600" rx="8.700" ry="2.700" fill="#dcdcdc" stroke="#9c9c9c" stroke-width=".6"/><ellipse cx="15" cy="3" rx="3.800" ry="1.400" fill="#f4f4f4" stroke="#aaa" stroke-width=".5"/><path d="M8.500 25.500L21 19.800C25 18.500 27.500 21.500 25 23.800L13 29.800z" fill="#303038"/><path d="M4.500 27l5-2.200 1.300 2.600-4.800 1.600z" fill="#e9a45a"/><path d="M6 28.800l5-1.800.8 1.500-4.500 1.500z" fill="#c8452e"/></svg>
<div class="a " style="left:62.5px;top:410.2px;font-size:16px;line-height:21px;color:#1d6b3b;">Power Options</div>
<svg style="left:269px;top:404px" width="32" height="32" viewBox="0 0 32 32"><path d="M3 9l12-5 14 4v16l-13 6-13-5z" fill="#d9dde6" stroke="#8a93a3" stroke-width=".7"/><path d="M3 9l13 5 13-6M16 14v16" fill="none" stroke="#8a93a3" stroke-width=".7"/><circle cx="22" cy="22" r="8" fill="url(#gSilverH)" stroke="#8b8b8b" stroke-width=".7"/><circle cx="22" cy="22" r="2" fill="#fff" stroke="#9a9a9a" stroke-width=".5"/></svg>
<div class="a " style="left:312.5px;top:410.2px;font-size:16px;line-height:21px;color:#1d6b3b;letter-spacing:-0.345px;">Programs and Features</div>
<svg style="left:519px;top:404px" width="32" height="32" viewBox="0 0 32 32"><path d="M10 4L30.5 10.8L30.5 23.5L10 16.7z" fill="#3aa7f2" stroke="#1c74bd" stroke-width=".8" stroke-linejoin="round"/><path d="M19 23.500l8 2.600 3-1-7-2.400z" fill="#d0d4d8"/><path d="M14 13.200A10 10 0 0 0 4.300 21" fill="none" stroke="#35b535" stroke-width="3.400"/><path d="M.6 19.800l7.800 1.600-4.900 5.600z" fill="#35b535"/><circle cx="13.200" cy="23.200" r="7" fill="#efefef" stroke="#9a9a9a" stroke-width="1"/><path d="M13.200 23.200V18.800M13.200 23.200l3.300-1.800" stroke="#444" stroke-width=".9" fill="none"/><g fill="#8a8a8a"><circle cx="13.200" cy="17.600" r=".5"/><circle cx="13.200" cy="28.800" r=".5"/><circle cx="7.600" cy="23.200" r=".5"/><circle cx="18.800" cy="23.200" r=".5"/></g></svg>
<div class="a " style="left:562.5px;top:410.2px;font-size:16px;line-height:21px;color:#1d6b3b;letter-spacing:-0.544px;">Recovery</div>
<svg style="left:769px;top:404px" width="32" height="32" viewBox="0 0 32 32"><circle cx="18.4" cy="11.8" r="11.3" fill="url(#gGlobe)"/><path d="M9.4 7.8c1.7-5.7 6.8-7.9 10.2-6.2c-1.1 3.4-5.7 2.3-6.2 7.9c-2.3 2.8-3.4 1.1-4.0-1.7z" fill="#3cc24a" opacity=".85"/><path d="M24.6 6.7c3.4 2.3 4.5 6.8 3.4 10.7c-3.4-1.1-4.5-6.8-3.4-10.7z" fill="#4fc848" opacity=".8"/><path d="M9.9 15.8c3.4-1.1 6.8 1.1 7.9 5.1c-3.4 0.6-6.8-1.7-7.9-5.1z" fill="#2fae44" opacity=".8"/><circle cx="10" cy="22.6" r="9.6" fill="#f3f4f5" stroke="#9aa2a8" stroke-width="1.100"/><circle cx="17.90" cy="22.60" r=".45" fill="#8a8a8a"/><circle cx="16.84" cy="26.55" r=".45" fill="#8a8a8a"/><circle cx="13.95" cy="29.44" r=".45" fill="#8a8a8a"/><circle cx="10.00" cy="30.50" r=".45" fill="#8a8a8a"/><circle cx="6.05" cy="29.44" r=".45" fill="#8a8a8a"/><circle cx="3.16" cy="26.55" r=".45" fill="#8a8a8a"/><circle cx="2.10" cy="22.60" r=".45" fill="#8a8a8a"/><circle cx="3.16" cy="18.65" r=".45" fill="#8a8a8a"/><circle cx="6.05" cy="15.76" r=".45" fill="#8a8a8a"/><circle cx="10.00" cy="14.70" r=".45" fill="#8a8a8a"/><circle cx="13.95" cy="15.76" r=".45" fill="#8a8a8a"/><circle cx="16.84" cy="18.65" r=".45" fill="#8a8a8a"/><path d="M10 22.600V15M10 22.600h6" stroke="#333" stroke-width="1" fill="none"/></svg>
<div class="a " style="left:812.5px;top:410.2px;font-size:16px;line-height:21px;color:#1d6b3b;letter-spacing:-0.401px;">Region</div>
<svg style="left:1019px;top:404px" width="32" height="32" viewBox="0 0 32 32"><rect x=".8" y="8.700" width="11" height="17.800" fill="#fff" stroke="#7a7a7a" stroke-width=".9"/><path d="M1.300 11.300h10" stroke="#7a7a7a" stroke-width=".7"/><path d="M10 19.500l8 1 2 6-10-1z" fill="#dcdcc8"/><path d="M7 3.5L29.6 5.5L28.5 20L6.6 17.5z" fill="url(#gScrBg)" stroke="#cfd6e6" stroke-width="0.8"/><path d="M7 3.5L17.17 4.40L24.12 19.50L6.6 17.5z" fill="url(#gNavy)"/><path d="M17.17 4.40L21.01 4.74L27.40 19.88L24.12 19.50z" fill="#5868d8" opacity=".75"/><circle cx="24.200" cy="24.500" r="7" fill="#f4f4f2" stroke="#8c8c8c" stroke-width="1.700"/><path d="M20.300 22l2.600 2.500-2.600 2.500M28.100 22l-2.600 2.500 2.600 2.500" fill="none" stroke="#2a8a2a" stroke-width="1.400"/></svg>
<div class="a " style="left:1062.5px;top:399.7px;font-size:16px;line-height:21px;color:#1d6b3b;letter-spacing:-0.331px;">RemoteApp and Desktop</div>
<div class="a " style="left:1062.5px;top:420.7px;font-size:16px;line-height:21px;color:#1d6b3b;letter-spacing:-0.376px;">Connections</div>
<svg style="left:19px;top:454px" width="32" height="32" viewBox="0 0 32 32"><path d="M1.800 4.500L11.300 31.500" stroke="#9c9c9c" stroke-width="2.100" stroke-linecap="round"/><circle cx="1.700" cy="3.900" r="1.900" fill="#b5b5b5" stroke="#8a8a8a" stroke-width=".5"/><path d="M3.600 8.800C8 5 12 3 17.500 4.500C20 9 25 11 32 9.300C30 14 27 17.500 24 18.500C18 19 14 17 8.200 22.500z" fill="url(#gFlag)"/><path d="M4.500 9.500C9 6 12.500 4.500 17 5.500C19.500 10 25 12 30.500 10.500" fill="none" stroke="#8fa0f4" stroke-width=".9" opacity=".8"/></svg>
<div class="a " style="left:62.5px;top:460.2px;font-size:16px;line-height:21px;color:#1d6b3b;">Security and Maintenance</div>
<svg style="left:269px;top:454px" width="32" height="32" viewBox="0 0 32 32"><path d="M4 12h7l9-8v24l-9-8H4z" fill="url(#gSilverV)" stroke="#7a7a7a" stroke-width=".8"/><path d="M23 11a7 7 0 0 1 0 10M26 8a11 11 0 0 1 0 16" fill="none" stroke="#2b8fe6" stroke-width="1.600"/></svg>
<div class="a " style="left:312.5px;top:460.2px;font-size:16px;line-height:21px;color:#1d6b3b;">Sound</div>
<svg style="left:519px;top:454px" width="32" height="32" viewBox="0 0 32 32"><path d="M7.800 12.500V17C7.800 23 12 26.300 16.100 27.500C20.200 26.300 24.400 23 24.400 17V12.500" fill="none" stroke="#7c7c7c" stroke-width="1.200"/><path d="M6.300 12.500h3M22.900 12.500h3" stroke="#7c7c7c" stroke-width="1"/><path d="M16.100 27.500V31M13 31.300h6.200" stroke="#7c7c7c" stroke-width="1.300"/><rect x="10.600" y="1.400" width="11.200" height="23.800" rx="5.600" fill="url(#gSilverH)" stroke="#7a7a7a" stroke-width=".8"/><path d="M11 9.300h10.400M11 11.300h10.400M11 13.300h10.400M11 15.300h10.400" stroke="#8a8a8a" stroke-width=".7"/></svg>
<div class="a " style="left:562.5px;top:460.2px;font-size:16px;line-height:21px;color:#1d6b3b;letter-spacing:-0.412px;">Speech Recognition</div>
<svg style="left:769px;top:454px" width="32" height="32" viewBox="0 0 32 32"><path d="M.5 23.0L16 17.5L31 21.0L15.500 27.0z" fill="#d4d4d4" stroke="#8a8a8a" stroke-width=".6"/><path d="M.5 23.0L15.500 27.0V31.7L.5 27.5z" fill="url(#gSilverV2)"/><path d="M15.500 27.0L31 21.0V25.7L15.500 31.7z" fill="#868686"/><path d="M15 26.8h2.600v4.700h-2.600z" fill="#4caf50"/><path d="M17.600 26.0L31 21.0V22.5L17.600 27.7z" fill="#eee" opacity=".85"/><path d="M.5 15.0L16 9.5L31 13.0L15.500 19.0z" fill="#d4d4d4" stroke="#8a8a8a" stroke-width=".6"/><path d="M.5 15.0L15.500 19.0V23.7L.5 19.5z" fill="url(#gSilverV2)"/><path d="M15.500 19.0L31 13.0V17.7L15.500 23.7z" fill="#868686"/><path d="M15 18.8h2.600v4.700h-2.600z" fill="#4caf50"/><path d="M17.600 18.0L31 13.0V14.5L17.600 19.7z" fill="#eee" opacity=".85"/><path d="M.5 6.8L16 1.3L31 4.8L15.500 10.8z" fill="#d4d4d4" stroke="#8a8a8a" stroke-width=".6"/><path d="M.5 6.8L15.500 10.8V15.5L.5 11.3z" fill="url(#gSilverV2)"/><path d="M15.500 10.8L31 4.8V9.5L15.500 15.5z" fill="#868686"/><path d="M15 10.600000000000001h2.600v4.700h-2.600z" fill="#4caf50"/><path d="M17.600 9.8L31 4.8V6.3L17.600 11.5z" fill="#eee" opacity=".85"/><path d="M14.500 2.800l3-1 2 .6-3 1z" fill="#666"/></svg>
<div class="a " style="left:812.5px;top:460.2px;font-size:16px;line-height:21px;color:#1d6b3b;letter-spacing:-0.730px;">Storage Spaces</div>
<svg style="left:1019px;top:454px" width="32" height="32" viewBox="0 0 32 32"><circle cx="16" cy="16.900" r="14.900" fill="#3cb94a" stroke="#2f9f3f" stroke-width=".8"/><path d="M10.100 11.100A8.300 8.300 0 0 1 24.300 17" fill="none" stroke="#f4ef7c" stroke-width="3.500"/><path d="M19.700 17h9.200l-4.600 4.800z" fill="#fbe64a"/><path d="M7.700 17A8.300 8.300 0 0 0 21.900 22.900" fill="none" stroke="#f4ef7c" stroke-width="3.500"/><path d="M3.100 17h9.200l-4.600-4.800z" fill="#fbe64a"/></svg>
<div class="a " style="left:1062.5px;top:460.2px;font-size:16px;line-height:21px;color:#1d6b3b;letter-spacing:-0.576px;">Sync Center</div>
<svg style="left:19px;top:504px" width="32" height="32" viewBox="0 0 32 32"><path d="M15 22l8 2.800 3.500-1.200-8-2.600z" fill="#c5c9ce"/><path d="M10 4L30 10.8L30 23.5L10 16.7z" fill="#2b8fe6" stroke="#1a63b4" stroke-width=".8" stroke-linejoin="round"/><path d="M17 13.300l2.600 3 5-4.300" fill="none" stroke="#fff" stroke-width="1.500"/><path d="M.3 26.300L11 24.300 24 28.600 13 31z" fill="#d2d6da"/><path d="M3 26.800l8-1.600M6 27.800l8-1.700M9.500 28.800l8-1.800M13 29.800l8-1.900M4 25.700l13 4.300M7.500 25l13 4.300" stroke="#a4a9af" stroke-width=".6"/></svg>
<div class="a " style="left:62.5px;top:510.2px;font-size:16px;line-height:21px;color:#1d6b3b;letter-spacing:-0.608px;">System</div>
<svg style="left:269px;top:504px" width="32" height="32" viewBox="0 0 32 32"><rect x=".8" y="2.500" width="17" height="19.800" fill="#f6f6f6" stroke="#4c4c4c" stroke-width="1"/><path d="M3.2 6.6l1.500 1.800 2.800-3.800" fill="none" stroke="#1f6fc4" stroke-width="1.5"/><path d="M3.2 12.100000000000001l1.500 1.800 2.800-3.800" fill="none" stroke="#1f6fc4" stroke-width="1.5"/><rect x="3.500" y="16.300" width="2.800" height="2.800" fill="#fff" stroke="#7e8ea8" stroke-width=".7"/><path d="M10.500 7.500h4M10.500 13h4M10.500 17.800h3" stroke="#a9b0ba" stroke-width="1"/><rect x="0" y="24.200" width="31.800" height="8.300" fill="url(#gBar)"/><g fill="#8b95ab"><rect x="14" y="27" width="3.300" height="3"/><rect x="20" y="27" width="3.300" height="3"/><rect x="26" y="27" width="3.300" height="3"/></g></svg>
<div class="a " style="left:312.5px;top:510.2px;font-size:16px;line-height:21px;color:#1d6b3b;letter-spacing:-0.266px;">Taskbar and Navigation</div>
<svg style="left:519px;top:504px" width="32" height="32" viewBox="0 0 32 32"><rect x=".8" y="4.300" width="29" height="24" rx="1" fill="#eef0f3" stroke="#505050" stroke-width="1"/><rect x="1.300" y="4.800" width="28" height="2.200" fill="#d5dae2"/><path d="M22.500 6h1.500M25 6h1.500M27.300 6h1.500" stroke="#333" stroke-width="1.200"/><path d="M6.500 24.500L24 24.500 28.500 27.600H3z" fill="#c6c9cd"/><path d="M15.5 8.4L29.3 9.3L29.3 23.5L14.3 21z" fill="url(#gScrBg)" stroke="none" stroke-width="0"/><path d="M15.5 8.4L21.71 8.80L26.30 23.00L14.3 21z" fill="url(#gNavy)"/><path d="M21.71 8.80L24.06 8.96L28.55 23.38L26.30 23.00z" fill="#5868d8" opacity=".75"/><rect x="7" y="15" width="2.600" height="11" fill="#c2c2c2" stroke="#6a6a6a" stroke-width=".6"/><path d="M10 17l4-1.500v9l-4 .5z" fill="#e9e6c8"/></svg>
<div class="a " style="left:562.5px;top:510.2px;font-size:16px;line-height:21px;color:#1d6b3b;letter-spacing:-0.149px;">Troubleshooting</div>
<svg style="left:769px;top:504px" width="32" height="32" viewBox="0 0 32 32"><ellipse cx="9.100" cy="8.600" rx="5" ry="5.700" fill="#c9ab6e"/><path d="M4.100 8.600c0 4 .8 7 2 8h6C13.400 15.600 14.100 12.600 14.100 8.600z" fill="#b9975a"/><ellipse cx="9.500" cy="9.800" rx="3.400" ry="4.400" fill="#f3cfa5"/><path d="M.8 25C1 19 4 16.500 8 16.500C12 16.500 15 19 15.400 25C10 27 5 27 .8 25z" fill="#5cad4c"/><path d="M6.300 16.800L8 22 9.700 16.800z" fill="#f4f4ee"/><ellipse cx="20" cy="11.800" rx="5.300" ry="5.700" fill="#33261e"/><ellipse cx="19.300" cy="13.800" rx="4.300" ry="5.300" fill="#b8774c"/><path d="M14 29C14 23 17 19.500 22.500 19.500C28 19.500 31 23 31 29C26 31.500 19 31.500 14 29z" fill="#5a96d8"/><path d="M18.500 20.300L20.500 26 23.500 19.800z" fill="#f2f5fa"/></svg>
<div class="a " style="left:812.5px;top:510.2px;font-size:16px;line-height:21px;color:#1d6b3b;letter-spacing:-0.372px;">User Accounts</div>
<svg style="left:1019px;top:504px" width="32" height="32" viewBox="0 0 32 32"><path d="M24 14.500L29 12.500V28L24 30.500z" fill="#585858"/><path d="M.5 10L24 14.500V30.500L.5 23.500z" fill="#9c9c9c"/><path d="M.5 5L7 6.200V11.300L.5 10zM9.500 6.800L16.500 8V13L9.500 11.700zM20 8.600L27.500 10V15.200L20 13.800z" fill="#adadad" stroke="#5a5a5a" stroke-width=".5"/><path d="M7 6.200L9 5.300V10.300L7 11.300zM16.500 8L18.500 7.200V12.200L16.500 13zM27.500 10L29.300 9.200V14.200L27.500 15.200z" fill="#5e5e5e"/><path d="M.5 14.300L24 19.300M.5 18.700L24 24.500M5 11v4.300M13 12.500v4.600M19.500 13.700v4.800M9 16.300v4.500M17 18v4.800M4 19.700v4.600M12.500 21.700v5M20.500 23.700v5.300" stroke="#4e4e4e" stroke-width=".7" fill="none"/><path d="M1 10.700L23.500 15M1 15L23.500 20M1 19.400L23.500 25.200" stroke="#d2d2d2" stroke-width=".6" fill="none" opacity=".8"/></svg>
<div class="a " style="left:1062.5px;top:510.2px;font-size:16px;line-height:21px;color:#1d6b3b;letter-spacing:-0.205px;">Windows Defender</div>
<svg style="left:19px;top:554px" width="32" height="32" viewBox="0 0 32 32"><circle cx="21.8" cy="11.5" r="9.3" fill="url(#gGlobe)"/><path d="M14.4 8.2c1.4-4.7 5.6-6.5 8.4-5.1c-0.9 2.8-4.7 1.9-5.1 6.5c-1.9 2.3-2.8 0.9-3.3-1.4z" fill="#3cc24a" opacity=".85"/><path d="M26.9 7.3c2.8 1.9 3.7 5.6 2.8 8.8c-2.8-0.9-3.7-5.6-2.8-8.8z" fill="#4fc848" opacity=".8"/><path d="M14.8 14.8c2.8-0.9 5.6 0.9 6.5 4.2c-2.8 0.5-5.6-1.4-6.5-4.2z" fill="#2fae44" opacity=".8"/><path d="M1 10.500L20.500 13.500V32L1 27z" fill="url(#gBrick)"/><path d="M20.500 13.500L24.700 11.500V29L20.500 32z" fill="#6f2e1c"/><path d="M1 13.8L20.500 17.2" stroke="#d89a7c" stroke-width=".5" opacity=".8"/><path d="M1 17.1L20.500 20.9" stroke="#d89a7c" stroke-width=".5" opacity=".8"/><path d="M1 20.4L20.500 24.6" stroke="#d89a7c" stroke-width=".5" opacity=".8"/><path d="M1 23.7L20.500 28.3" stroke="#d89a7c" stroke-width=".5" opacity=".8"/><path d="M6 11.3v3.300" stroke="#d89a7c" stroke-width=".5" opacity=".7"/><path d="M13 12.3v3.300" stroke="#d89a7c" stroke-width=".5" opacity=".7"/><path d="M3 14.1v3.300" stroke="#d89a7c" stroke-width=".5" opacity=".7"/><path d="M9.5 15.3v3.300" stroke="#d89a7c" stroke-width=".5" opacity=".7"/><path d="M16 16.4v3.300" stroke="#d89a7c" stroke-width=".5" opacity=".7"/><path d="M6 18.1v3.300" stroke="#d89a7c" stroke-width=".5" opacity=".7"/><path d="M13 19.4v3.300" stroke="#d89a7c" stroke-width=".5" opacity=".7"/><path d="M3 20.8v3.300" stroke="#d89a7c" stroke-width=".5" opacity=".7"/><path d="M9.5 22.2v3.300" stroke="#d89a7c" stroke-width=".5" opacity=".7"/><path d="M16 23.6v3.300" stroke="#d89a7c" stroke-width=".5" opacity=".7"/><path d="M6 24.9v3.300" stroke="#d89a7c" stroke-width=".5" opacity=".7"/><path d="M13 26.5v3.300" stroke="#d89a7c" stroke-width=".5" opacity=".7"/></svg>
<div class="a " style="left:62.5px;top:560.2px;font-size:16px;line-height:21px;color:#1d6b3b;letter-spacing:-0.127px;">Windows Firewall</div>
<svg style="left:269px;top:554px" width="32" height="32" viewBox="0 0 32 32"><path d="M9.7 3h11.6v24.2h-11.6z" fill="#f3cb58"/><path d="M4.7 3h5.3l0.5 1.3v22.9l-2.2 1.8l-3.7-1.6z" fill="#fbe5a0"/><path d="M10.5 4.3h10.8v22.4h-10.8z" fill="#f7d56f"/><path d="M12 14.500L21 10.400 30 14 21 18.500z" fill="#45a8ee"/><path d="M12 14.500L21 18.500V31.300L12 27z" fill="#1b7fd0"/><path d="M21 18.500L30 14V26.500L21 31.300z" fill="#1567b2"/><path d="M12 18.700l9 4.200 9-4.500M12 22.800l9 4.300 9-4.700M15 15.800v12.600M18 17.200v12.700M24 17v12.700M27 15.500v12.500M15 13.200l9 4M18 11.800l9 3.800" stroke="#7cc8f6" stroke-width=".5" fill="none"/></svg>
<div class="a " style="left:312.5px;top:560.2px;font-size:16px;line-height:21px;color:#1d6b3b;letter-spacing:-0.291px;">Work Folders</div>
<!-- Mouse Properties dialog -->
<div class="bx" style="left:59px;top:52px;width:400px;height:455px;background:#f0f0f0;border:1px solid #4379ae;box-shadow:0 0 0 1px rgba(170,220,255,.55),2px 1px 14px rgba(0,0,0,.3)"></div>
<div class="bx" style="left:60px;top:53px;width:398px;height:30px;background:#fff"></div>
<svg style="left:68px;top:59px" width="16" height="16" viewBox="0 0 32 32"><defs><radialGradient id="mgS" cx="0.38" cy="0.66" r="0.55"><stop offset="0" stop-color="#ffffff"/><stop offset="0.45" stop-color="#dcdcdc"/><stop offset="1" stop-color="#a8a8a8"/></radialGradient></defs><g transform="translate(-6.400,-8.600) scale(.0445)"><path d="M400 340C340 400 230 480 170 560C130 610 135 680 170 720C230 770 330 800 420 800C500 800 560 770 600 710C650 630 720 540 840 400C845 370 820 330 780 305C720 270 640 245 560 232C500 226 470 240 440 280Z" fill="url(#mgS)"/><path d="M600 370C560 450 545 560 545 700C545 740 535 765 520 785C560 775 590 740 620 690C660 620 720 540 840 400C845 370 820 330 780 305C720 290 650 320 600 370Z" fill="#c2c2c2"/><path d="M600 370C560 450 545 560 545 700C545 740 535 765 520 785" fill="none" stroke="#8e8e8e" stroke-width="7"/><path d="M625 600C625 520 650 450 700 400C750 360 800 345 830 360C845 375 842 395 836 410C760 490 700 560 650 635Z" fill="#3a3a3a"/><path d="M625 598C625 520 650 450 700 400C750 360 800 345 828 358C795 420 720 505 662 592C652 610 640 616 631 612Z" fill="#05051c"/><path d="M425 300L490 232L575 236L500 318Z" fill="#909090"/><path d="M400 340L425 300L500 318L470 370Z" fill="#dddddd"/><path d="M485 348L545 258L670 258L610 300L560 322L520 352Z" fill="#1c1c1c"/><path d="M555 285L598 246L628 256L583 298Z" fill="#f4f4f4"/><path d="M160 700C220 760 330 795 420 795C500 795 560 765 598 712" fill="none" stroke="#9c9c9c" stroke-width="14"/><path d="M400 340C340 400 230 480 170 560C135 605 135 670 160 700" fill="none" stroke="#bdbdbd" stroke-width="8"/></g></svg>
<div class="a " style="left:89.7px;top:59.6px;font-size:12px;line-height:16px;color:#000;letter-spacing:-0.197px;">Mouse Properties</div>
<svg style="left:438px;top:62px" width="10" height="10" viewBox="0 0 10 10"><path d="M0.300 0.300l9.400 9.400M9.700 0.300l-9.400 9.400" stroke="#111" stroke-width="1.100" fill="none"/></svg>
<div class="bx" style="left:67px;top:110px;width:383px;height:358px;background:#fff;border:1px solid #dadada"></div>
<div class="bx" style="left:117px;top:92px;width:49px;height:19px;background:#f0f0f0;border:1px solid #d9d9d9"></div>
<div class="bx" style="left:165px;top:92px;width:85px;height:19px;background:#f0f0f0;border:1px solid #d9d9d9"></div>
<div class="bx" style="left:249px;top:92px;width:44px;height:19px;background:#f0f0f0;border:1px solid #d9d9d9"></div>
<div class="bx" style="left:292px;top:92px;width:57px;height:19px;background:#f0f0f0;border:1px solid #d9d9d9"></div>
<div class="bx" style="left:66px;top:90px;width:52px;height:21px;background:#fff;border:1px solid #dadada;border-bottom:none"></div>
<div class="a " style="left:74.5px;top:93.8px;font-size:11px;line-height:13px;color:#000;letter-spacing:-0.402px;">Buttons</div>
<div class="a " style="left:122.5px;top:95.6px;font-size:11px;line-height:13px;color:#000;letter-spacing:-0.488px;">Pointers</div>
<div class="a " style="left:172.5px;top:95.6px;font-size:11px;line-height:13px;color:#000;letter-spacing:-0.347px;">Pointer Options</div>
<div class="a " style="left:256px;top:95.6px;font-size:11px;line-height:13px;color:#000;letter-spacing:-0.175px;">Wheel</div>
<div class="a " style="left:299.5px;top:95.6px;font-size:11px;line-height:13px;color:#000;letter-spacing:-0.398px;">Hardware</div>
<div class="bx" style="left:81px;top:129px;width:357px;height:108px;border:1px solid #dcdcdc"></div>
<div class="bx" style="left:88px;top:127px;width:98.8px;height:5px;background:#fff"></div>
<div class="a " style="left:90.3px;top:123.8px;font-size:11px;line-height:13px;color:#000;letter-spacing:-0.208px;">Button configuration</div>
<div class="bx" style="left:90px;top:145px;width:13px;height:13px;border:1px solid #333;background:#fff"></div>
<div class="a " style="left:106px;top:145.5px;font-size:11px;line-height:13px;color:#000;letter-spacing:-0.211px;">Switch primary and secondary buttons</div>
<div class="a " style="left:90px;top:167.3px;font-size:11px;line-height:13px;color:#000;letter-spacing:-0.111px;">Select this check box to make the button on the</div>
<div class="a " style="left:90px;top:180.3px;font-size:11px;line-height:13px;color:#000;letter-spacing:-0.226px;">right the one you use for primary functions such</div>
<div class="a " style="left:90px;top:193.3px;font-size:11px;line-height:13px;color:#000;letter-spacing:-0.213px;">as selecting and dragging.</div>
<div class="bx" style="left:330px;top:133px;width:98px;height:101px;background:#efefef"></div>
<svg style="left:325px;top:128px" width="120" height="112" viewBox="0 0 1097 1024"><defs><radialGradient id="mg" cx="0.38" cy="0.66" r="0.55"><stop offset="0" stop-color="#fdfdfd"/><stop offset="0.45" stop-color="#e9e9e9"/><stop offset="1" stop-color="#c9c9c9"/></radialGradient></defs><path d="M400 340C340 400 230 480 170 560C130 610 135 680 170 720C230 770 330 800 420 800C500 800 560 770 600 710C650 630 720 540 840 400C845 370 820 330 780 305C720 270 640 245 560 232C500 226 470 240 440 280Z" fill="url(#mg)"/><path d="M600 370C560 450 545 560 545 700C545 740 535 765 520 785C560 775 590 740 620 690C660 620 720 540 840 400C845 370 820 330 780 305C720 290 650 320 600 370Z" fill="#c2c2c2"/><path d="M600 370C560 450 545 560 545 700C545 740 535 765 520 785" fill="none" stroke="#8e8e8e" stroke-width="7"/><path d="M625 600C625 520 650 450 700 400C750 360 800 345 830 360C845 375 842 395 836 410C760 490 700 560 650 635Z" fill="#1a1aa6"/><path d="M625 598C625 520 650 450 700 400C750 360 800 345 828 358C795 420 720 505 662 592C652 610 640 616 631 612Z" fill="#05051c"/><path d="M425 300L490 232L575 236L500 318Z" fill="#2f8ae8"/><path d="M400 340L425 300L500 318L470 370Z" fill="#d9dfe8"/><path d="M485 348L545 258L670 258L610 300L560 322L520 352Z" fill="#0f1050"/><path d="M555 285L598 246L628 256L583 298Z" fill="#f4f4f4"/><path d="M160 700C220 760 330 795 420 795C500 795 560 765 598 712" fill="none" stroke="#9c9c9c" stroke-width="14"/><path d="M400 340C340 400 230 480 170 560C135 605 135 670 160 700" fill="none" stroke="#bdbdbd" stroke-width="8"/></svg>
<div class="bx" style="left:81px;top:246px;width:357px;height:99px;border:1px solid #dcdcdc"></div>
<div class="bx" style="left:88px;top:244px;width:95.3px;height:5px;background:#fff"></div>
<div class="a " style="left:90.3px;top:240.8px;font-size:11px;line-height:13px;color:#000;letter-spacing:-0.151px;">Double-click speed</div>
<div class="a " style="left:90px;top:257.8px;font-size:11px;line-height:13px;color:#000;letter-spacing:-0.162px;">Double-click the folder to test your setting. If the</div>
<div class="a " style="left:90px;top:270.8px;font-size:11px;line-height:13px;color:#000;letter-spacing:-0.218px;">folder does not open or close, try using a slower</div>
<div class="a " style="left:90px;top:283.8px;font-size:11px;line-height:13px;color:#000;letter-spacing:-0.276px;">setting.</div>
<div class="a " style="left:90px;top:305.8px;font-size:11px;line-height:13px;color:#000;letter-spacing:-0.268px;">Speed:</div>
<div class="a " style="left:138.4px;top:305.8px;font-size:11px;line-height:13px;color:#000;letter-spacing:-0.641px;">Slow</div>
<div class="a " style="left:282.4px;top:305.8px;font-size:11px;line-height:13px;color:#000;letter-spacing:-0.802px;">Fast</div>
<div class="bx" style="left:173px;top:313px;width:101px;height:4px;background:#e7eaea;border:1px solid #d6d6d6"></div>
<svg style="left:227px;top:306px" width="11" height="20" viewBox="0 0 11 20"><path d="M0 0h11v14.500l-5.500 5.500-5.500-5.500z" fill="#0078d7"/></svg>
<svg style="left:173px;top:327px" width="101" height="4" viewBox="0 0 101 4"><rect x="5.00" y="0" width="1" height="4" fill="#c4c4c4"/><rect x="14.05" y="0" width="1" height="4" fill="#c4c4c4"/><rect x="23.10" y="0" width="1" height="4" fill="#c4c4c4"/><rect x="32.15" y="0" width="1" height="4" fill="#c4c4c4"/><rect x="41.20" y="0" width="1" height="4" fill="#c4c4c4"/><rect x="50.25" y="0" width="1" height="4" fill="#c4c4c4"/><rect x="59.30" y="0" width="1" height="4" fill="#c4c4c4"/><rect x="68.35" y="0" width="1" height="4" fill="#c4c4c4"/><rect x="77.40" y="0" width="1" height="4" fill="#c4c4c4"/><rect x="86.45" y="0" width="1" height="4" fill="#c4c4c4"/><rect x="95.50" y="0" width="1" height="4" fill="#c4c4c4"/></svg>
<div class="bx" style="left:367px;top:275px;width:58px;height:59px;border-left:1px solid #868686;border-top:1px solid #868686"></div>
<svg style="left:360px;top:268px" width="80" height="72" viewBox="0 0 1138 1024">
<defs><linearGradient id="fg" x1="0" y1="0" x2="1" y2="1"><stop offset="0" stop-color="#fbefb4"/><stop offset="1" stop-color="#f4d96a"/></linearGradient></defs>
<path d="M600 560L690 610L640 700L590 720Z" fill="#cfcfcf" opacity=".8"/>
<path d="M580 590L625 560L640 690L590 715Z" fill="#f6e9b0"/>
<path d="M318 292L585 345L598 720L322 630Z" fill="url(#fg)"/>
<path d="M340 330L570 372L578 690L342 612Z" fill="#f8e596" opacity=".6"/>
</svg>
<div class="bx" style="left:81px;top:355px;width:357px;height:99px;border:1px solid #dcdcdc"></div>
<div class="bx" style="left:88px;top:353px;width:51.3px;height:5px;background:#fff"></div>
<div class="a " style="left:90.3px;top:349.8px;font-size:11px;line-height:13px;color:#000;letter-spacing:-0.092px;">ClickLock</div>
<div class="bx" style="left:90px;top:370px;width:13px;height:13px;border:1px solid #333;background:#fff"></div>
<div class="a " style="left:106.9px;top:370.7px;font-size:11px;line-height:13px;color:#000;letter-spacing:-0.159px;">Turn on ClickLock</div>
<div class="bx" style="left:332px;top:367px;width:93px;height:21px;background:#cccccc;border:1px solid #bfbfbf"></div>
<div class="a " style="left:355.3px;top:371.3px;font-size:11px;line-height:13px;color:#838383;letter-spacing:-0.250px;">Settings...</div>
<div class="a " style="left:90px;top:393.9px;font-size:11px;line-height:13px;color:#000;letter-spacing:-0.202px;">Enables you to highlight or drag without holding down the mouse</div>
<div class="a " style="left:90px;top:406.9px;font-size:11px;line-height:13px;color:#000;letter-spacing:-0.124px;">button. To set, briefly press the mouse button. To release, click the</div>
<div class="a " style="left:90px;top:419.9px;font-size:11px;line-height:13px;color:#000;letter-spacing:-0.199px;">mouse button again.</div>
<div class="bx" style="left:216px;top:477px;width:73px;height:21px;background:#e1e1e1;border:2px solid #0078d7"></div>
<div class="bx" style="left:297px;top:477px;width:73px;height:21px;background:#e1e1e1;border:1px solid #adadad"></div>
<div class="bx" style="left:378px;top:477px;width:73px;height:21px;background:#cccccc;border:1px solid #bfbfbf"></div>
<div class="a " style="left:244.4px;top:481.5px;font-size:11px;line-height:13px;color:#000;letter-spacing:-0.204px;">OK</div>
<div class="a " style="left:316.25px;top:481.5px;font-size:11px;line-height:13px;color:#000;letter-spacing:-0.227px;">Cancel</div>
<div class="a " style="left:401.25px;top:481.5px;font-size:11px;line-height:13px;color:#838383;letter-spacing:-0.562px;">Apply</div>
<svg style="left:425px;top:367px" width="13" height="20" viewBox="0 0 13 20"><path d="M0.500 0.700v16l3.700-3.500 2.500 5.800 2.300-1-2.500-5.700h5z" fill="#fff" stroke="#000" stroke-width="1" stroke-linejoin="miter"/></svg>
<!-- taskbar -->
<div class="bx" style="left:0;top:984px;width:1280px;height:40px;background:#06060a"></div>
<svg style="left:16px;top:996px" width="16" height="16" viewBox="0 0 16 16"><path d="M0 2.200l6.500-.900v6.200h-6.500zM7.300 1.200l8.700-1.200v7.500h-8.700zM0 8.300h6.500v6.300l-6.500-.900zM7.300 8.300h8.700v7.700l-8.700-1.200z" fill="#fff"/></svg>
<div class="bx" style="left:48px;top:984px;width:344px;height:40px;background:#373737"></div>
<div class="a " style="left:60px;top:994.8px;font-size:15px;line-height:20px;color:#a6a6a6;letter-spacing:-0.135px;">Search the web and Windows</div>
<svg style="left:406px;top:997px" width="21" height="14" viewBox="0 0 21 14"><g fill="none" stroke="#fff" stroke-width="1.300"><rect x="4.650" y=".65" width="11.700" height="12.700"/><path d="M2.500 2.600h-1.850v8.800h1.850M18.500 2.600h1.850v8.800h-1.850"/></g></svg>
<svg style="left:456px;top:993px" width="21" height="22" viewBox="0 0 21 22"><path d="M.6 10.200C1.200 4.500 5.300.4 10.800.4c5.800 0 9.600 4 9.600 10.300v2.200H7.100c.3 3 2.600 4.600 5.900 4.600 2.300 0 4.300-.6 6.200-1.800v4.300c-1.900 1.100-4.400 1.700-7.200 1.700C5.600 21.700 1.600 18 1.600 12.700c0-3 1.500-5.600 4.100-7.300C3.300 6.200 1.500 7.900.6 10.200zM7.200 9h7.300c0-2.500-1.300-4.100-3.500-4.100C8.900 4.900 7.500 6.500 7.200 9z" fill="#1b7fe0"/></svg>
<svg style="left:504px;top:994px" width="22" height="19" viewBox="0 0 22 19"><path d="M0 1.200h7.500l1.500 1.800h12.500v3H0z" fill="#e8b94a"/><path d="M0 4.200h21.500v14.300H0z" fill="#fbd86d"/><path d="M3.500 11h14.500v7.500h-4v-4h-6.500v4h-4z" fill="#35b2ea"/><path d="M0 4.200h21.500v1.300H0z" fill="#fde79c"/></svg>
<svg style="left:553px;top:992px" width="21" height="23" viewBox="0 0 21 23"><path d="M6.300 6.500V4.800a4.300 4.300 0 0 1 8.600 0v1.700" fill="none" stroke="#fff" stroke-width="1.400"/><path d="M0 7.200l19-1.400 1.800 1.300v15.400L0 20.200z" fill="#fff"/><path d="M4.200 10.500l5-.5v4.200h-5zM10.200 9.900l5.800-.6v4.900h-5.800zM4.200 15.100h5v4l-5-.5zM10.200 15.100h5.800v4.900l-5.800-.7z" fill="#06060a"/></svg>
<svg style="left:602.5px;top:992.8px" width="21.5" height="21.5" viewBox="0 0 32 32"><rect x="1" y="4.800" width="30" height="22.400" fill="#7ccdfb" stroke="#0f4f8a" stroke-width="0"/><circle cx="10.500" cy="14" r="5.300" fill="#1c5fae"/><path d="M10.500 14V8.700A5.300 5.300 0 0 1 15.800 14z" fill="#f6c23a"/><path d="M7 17.500a5.300 5.300 0 0 0 7 0z" fill="#e8f6ff" opacity=".7"/><path d="M19.500 10.500h8M19.500 14.500h8M19.500 18.500h8" stroke="#e8f6ff" stroke-width="2"/><path d="M22 9v3M26 13v3M21 17v3" stroke="#1c5fae" stroke-width="2"/><path d="M3.500 23.300h11" stroke="#e9b44a" stroke-width="2"/><path d="M17 23.300h11.500" stroke="#1c5fae" stroke-width="2"/></svg>
<div class="bx" style="left:593px;top:1022px;width:40px;height:2px;background:#85c6f3"></div>
<div class="bx" style="left:638px;top:984px;width:48px;height:40px;background:#383838"></div>
<div class="bx" style="left:638px;top:1022px;width:48px;height:2px;background:#85c6f3"></div>
<svg style="left:650px;top:992px" width="23" height="23" viewBox="0 0 32 32"><defs><radialGradient id="mgT" cx="0.38" cy="0.66" r="0.55"><stop offset="0" stop-color="#ffffff"/><stop offset="0.45" stop-color="#e4e4e4"/><stop offset="1" stop-color="#b4b4b4"/></radialGradient></defs><g transform="translate(-5.930,-8.480) scale(.0439)"><path d="M400 340C340 400 230 480 170 560C130 610 135 680 170 720C230 770 330 800 420 800C500 800 560 770 600 710C650 630 720 540 840 400C845 370 820 330 780 305C720 270 640 245 560 232C500 226 470 240 440 280Z" fill="url(#mgT)"/><path d="M600 370C560 450 545 560 545 700C545 740 535 765 520 785C560 775 590 740 620 690C660 620 720 540 840 400C845 370 820 330 780 305C720 290 650 320 600 370Z" fill="#c2c2c2"/><path d="M600 370C560 450 545 560 545 700C545 740 535 765 520 785" fill="none" stroke="#8e8e8e" stroke-width="7"/><path d="M625 600C625 520 650 450 700 400C750 360 800 345 830 360C845 375 842 395 836 410C760 490 700 560 650 635Z" fill="#3a3a3a"/><path d="M625 598C625 520 650 450 700 400C750 360 800 345 828 358C795 420 720 505 662 592C652 610 640 616 631 612Z" fill="#05051c"/><path d="M425 300L490 232L575 236L500 318Z" fill="#909090"/><path d="M400 340L425 300L500 318L470 370Z" fill="#dddddd"/><path d="M485 348L545 258L670 258L610 300L560 322L520 352Z" fill="#1c1c1c"/><path d="M555 285L598 246L628 256L583 298Z" fill="#f4f4f4"/><path d="M160 700C220 760 330 795 420 795C500 795 560 765 598 712" fill="none" stroke="#9c9c9c" stroke-width="14"/><path d="M400 340C340 400 230 480 170 560C135 605 135 670 160 700" fill="none" stroke="#bdbdbd" stroke-width="8"/></g></svg>
<svg style="left:1020px;top:980px" width="130" height="44" viewBox="0 0 1280 433">
<clipPath id="tbclip"><rect x="0" y="40" width="1280" height="393"/></clipPath>
<g clip-path="url(#tbclip)">
<path d="M150 218C105 240 95 300 135 325L385 405L565 175L575 112" fill="none" stroke="#969696" stroke-width="30" stroke-linejoin="round" stroke-linecap="round"/>
<path d="M385 285L562 118L585 105L582 180L392 410L370 398Z" fill="#969696"/>
<path d="M235 30L590 30L560 120L385 288L125 222Z" fill="#9b9b9b"/>
<path d="M150 232L380 298L372 364L150 296C128 282 132 246 150 232Z" fill="#06060a"/>
<path d="M312 38L472 72L462 108L296 66Z" fill="#06060a"/>
<rect x="556" y="100" width="30" height="60" rx="14" fill="#969696"/>
</g></svg>
<div class="a " style="left:1093px;top:986.5px;font-size:19.5px;line-height:24px;color:#636363;letter-spacing:-0.758px;">The Collection Book</div>
<svg style="left:1115px;top:996px" width="90" height="17" viewBox="0 0 90 17"><g fill="none" stroke="#f2f2f2" stroke-width="1"><path d="M.8 10.300l5.300-5.500 5.300 5.500"/><path d="M25.600 2.500h12v8.200h-12zM31.600 10.700v3M27.600 14.200h8"/><path d="M23 2.500h4.500v4h-4.500z" fill="#06060a"/><path d="M46.800 5.500h2.200l3.200-3.500v12l-3.200-3.500h-2.200z"/><path d="M54.500 5.800a3 3 0 0 1 0 4.400M56.700 3.800a6 6 0 0 1 0 8.400M59 2a9 9 0 0 1 0 12"/><path d="M70.600.6h14.800v10.800h-5l-2.400 2.600-2.400-2.600h-5z"/><path d="M73.500 4h9M73.500 6.200h9M73.500 8.400h5.500"/></g></svg>
<div class="a " style="left:1218px;top:987.2px;font-size:12px;line-height:15px;color:#fff;letter-spacing:-0.159px;">9:26 AM</div>
<div class="a " style="left:1214px;top:1003.5px;font-size:12px;line-height:15px;color:#fff;letter-spacing:-0.187px;">8/23/2015</div>
<div class="bx" style="left:1275px;top:984px;width:1px;height:40px;background:#4a4a4a"></div>
</body></html>
